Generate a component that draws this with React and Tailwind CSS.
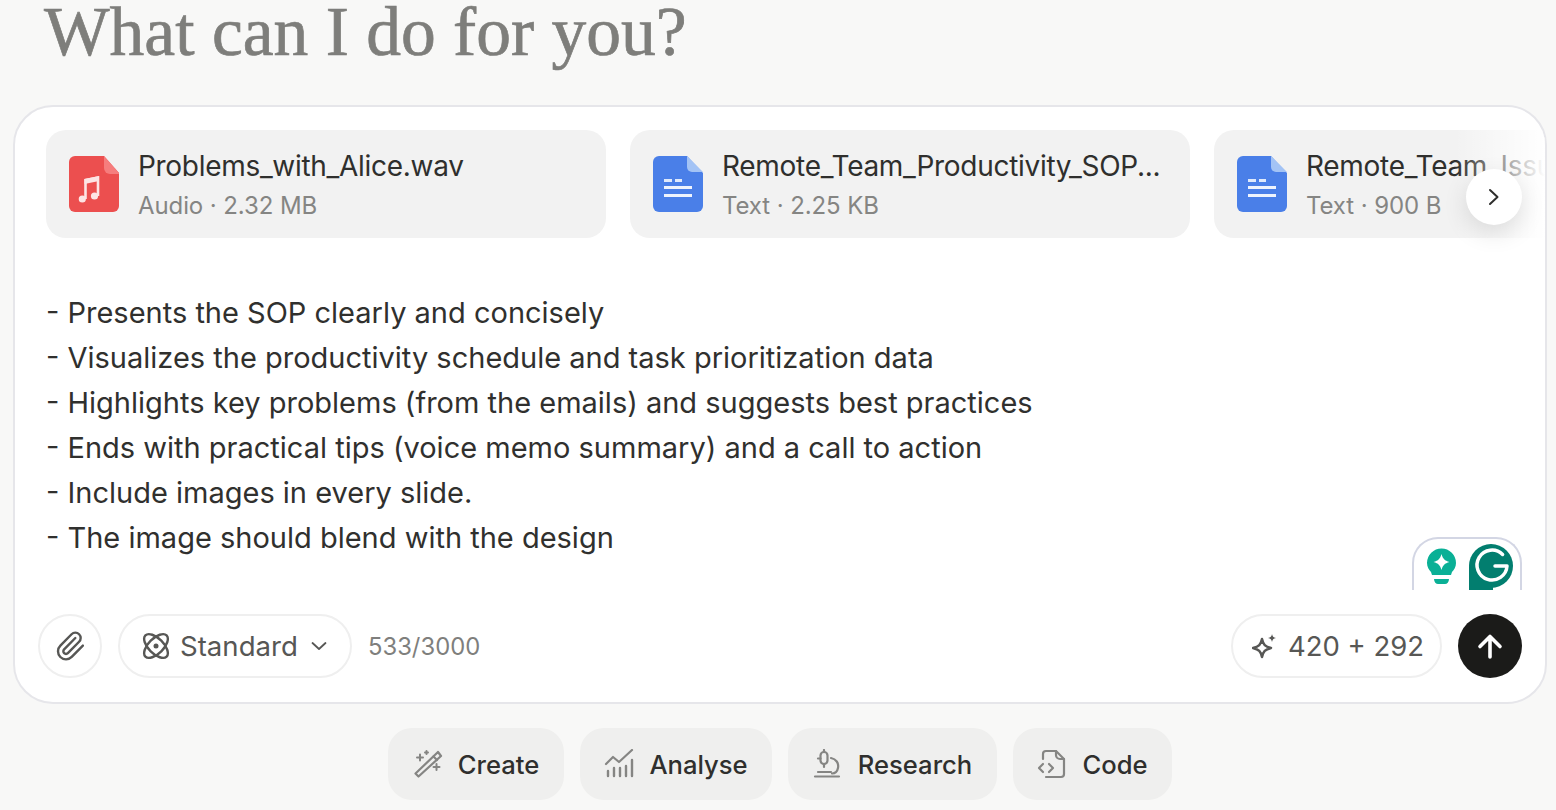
import React from "react";

function AudioIcon() {
  return (
    <svg width="50" height="56" viewBox="0 0 50 56" className="shrink-0">
      <path d="M6 0H35L50 17V50a6 6 0 0 1-6 6H6a6 6 0 0 1-6-6V6a6 6 0 0 1 6-6Z" fill="#ec4f4f" />
      <path d="M35 0L50 17V18H41a6 6 0 0 1-6-6Z" fill="#f67d7d" />
      <path d="M16.500 43V24l12.500-2.500V40" fill="none" stroke="#fde4e4" strokeWidth="2.600" />
      <circle cx="13.300" cy="43" r="3.600" fill="#fde4e4" />
      <circle cx="25.500" cy="40" r="3.600" fill="#fde4e4" />
      <path d="M15.500 23l14.500-3v5l-14.500 3Z" fill="#fde4e4" />
    </svg>
  );
}

function DocIcon() {
  return (
    <svg width="50" height="56" viewBox="0 0 50 56" className="shrink-0">
      <path d="M6 0H34L50 17V50a6 6 0 0 1-6 6H6a6 6 0 0 1-6-6V6a6 6 0 0 1 6-6Z" fill="#4a7fe8" />
      <path d="M34 0L50 16H39a5 5 0 0 1-5-5Z" fill="#a3c3f5" />
      <rect x="11" y="23" width="8" height="3" fill="#dfe9fb" />
      <rect x="22" y="23" width="7" height="3" fill="#dfe9fb" />
      <rect x="11" y="30" width="28" height="3" fill="#eef3fd" />
      <rect x="11" y="38" width="28" height="3" fill="#eef3fd" />
    </svg>
  );
}

function FileChip({ icon, name, meta }) {
  return (
    <div className="flex h-[108px] w-[560px] shrink-0 items-center gap-[19px] rounded-[20px] bg-[#f2f2f2] pl-[23px] pr-[24px]">
      {icon}
      <div className="min-w-0 flex-1 pt-[2px]">
        <div className="whitespace-nowrap text-[28px] leading-[36px] tracking-[-0.3px] text-[#2f2f2d]">{name}</div>
        <div className="mt-[6px] text-[24px] leading-[32px] tracking-[-0.1px] text-[#858583]">{meta}</div>
      </div>
    </div>
  );
}

function Pill({ children, className = "" }) {
  return (
    <div className={`flex h-[64px] items-center rounded-full border-2 border-[#efefef] bg-white ${className}`}>
      {children}
    </div>
  );
}

function QuickAction({ icon, label, w }) {
  return (
    <div className={`flex h-[72px] items-center justify-center gap-[15px] rounded-[24px] bg-[#efefee] text-[25.600px] font-medium text-[#2f2f2d] ${w}`}>
      {icon}
      <span className="mt-[2px]">{label}</span>
    </div>
  );
}

const Sv = ({ children, size = 30 }) => (
  <svg width={size} height={size} viewBox="0 0 30 30" fill="none" stroke="#858583" strokeWidth="2.200" strokeLinecap="round" strokeLinejoin="round" className="shrink-0">
    {children}
  </svg>
);

const lines = [
  "- Presents the SOP clearly and concisely",
  "- Visualizes the productivity schedule and task prioritization data",
  "- Highlights key problems (from the emails) and suggests best practices",
  "- Ends with practical tips (voice memo summary) and a call to action",
  "- Include images in every slide.",
  "- The image should blend with the design",
];

export default function App() {
  return (
    <div className="flex h-[810px] w-[1556px] flex-col overflow-hidden bg-[#f8f8f7] font-['Inter',sans-serif]">
      <h1 className="ml-[44px] h-[105px] whitespace-nowrap font-['Liberation_Serif',serif] text-[69.500px] leading-[64px] text-[#7e7e7b] [-webkit-text-stroke:0.7px_#7e7e7b]">What can I do for you?</h1>

      <div className="relative mx-[13px] h-[599px] w-[1534px] overflow-hidden rounded-[40px] border-2 border-[#e6e6ea] bg-white">
        <div className="flex gap-[24px] pl-[31px] pt-[23px]">
          <FileChip icon={<AudioIcon />} name="Problems_with_Alice.wav" meta="Audio · 2.32 MB" />
          <FileChip icon={<DocIcon />} name="Remote_Team_Productivity_SOP..." meta="Text · 2.25 KB" />
          <FileChip icon={<DocIcon />} name="Remote_Team_Issues.txt" meta="Text · 900 B" />
        </div>

        <div className="pointer-events-none absolute right-0 top-[23px] h-[108px] w-[90px] bg-gradient-to-r from-transparent to-white" />
        <div className="absolute right-[23px] top-[62px] flex h-[56px] w-[56px] items-center justify-center rounded-full bg-white shadow-[0_8px_24px_rgba(0,0,0,0.12)]">
          <svg width="22" height="22" viewBox="0 0 22 22" fill="none" stroke="#2f2f2d" strokeWidth="2" strokeLinecap="round" strokeLinejoin="round">
            <path d="M7 4l7.500 7L7 18" />
          </svg>
        </div>

        <div className="mt-[51.500px] pl-[31px] text-[29px] leading-[45px] text-[#30302e]">
          {lines.map((l) => (
            <div key={l}>{l}</div>
          ))}
        </div>

        <div className="absolute right-[23px] top-[430px] h-[53px] w-[110px] overflow-hidden rounded-t-[26px] border-2 border-b-0 border-[#d3d6e4] bg-white">
          <svg width="106" height="51" viewBox="0 0 106 51" className="block">
            <path d="M17 33c-2-2-4-5-4-9a14.500 14.500 0 1 1 29 0c0 4-2 7-4 9l-1 3H18Z" fill="#0ab096" />
            <path d="M20 40h15c0 3-2 5-4 5h-7c-2 0-4-2-4-5Z" fill="#0ab096" />
            <path d="M27.500 15c1.500 5 3 6.500 8 8-5 1.500-6.500 3-8 8-1.500-5-3-6.500-8-8 5-1.500 6.500-3 8-8Z" fill="#fff" />
            <circle cx="77" cy="27" r="22" fill="#027e6f" />
            <path d="M55 27v24h24V47Z" fill="#027e6f" />
            <path d="M88.600 15.400A15 15 0 1 0 93 27H81" fill="none" stroke="#fff" strokeWidth="3.500" strokeLinecap="round" strokeLinejoin="round" />
          </svg>
        </div>

        <div className="absolute inset-x-[23px] bottom-[24px] flex items-center">
          <Pill className="w-[64px] justify-center">
            <svg width="32" height="32" viewBox="0 0 24 24" fill="none" stroke="#575755" strokeWidth="1.800" strokeLinecap="round" strokeLinejoin="round">
              <path d="m16 6-8.414 8.586a2 2 0 0 0 2.829 2.829l8.414-8.586a4 4 0 1 0-5.657-5.657l-8.379 8.551a6 6 0 1 0 8.485 8.485l8.379-8.551" />
            </svg>
          </Pill>
          <Pill className="ml-[16px] w-[234px] pl-[22px] text-[27.600px] text-[#575755]">
            <svg width="28" height="28" viewBox="0 0 28 28" fill="none" stroke="#575755" strokeWidth="2.400" className="shrink-0">
              <ellipse cx="14" cy="14" rx="15" ry="7.500" transform="rotate(45 14 14)" />
              <ellipse cx="14" cy="14" rx="15" ry="7.500" transform="rotate(-45 14 14)" />
              <circle cx="14" cy="14" r="2.500" fill="#575755" stroke="none" />
            </svg>
            <span className="ml-[10px] mt-[1px]">Standard</span>
            <svg width="18" height="18" viewBox="0 0 18 18" fill="none" stroke="#575755" strokeWidth="1.800" strokeLinecap="round" strokeLinejoin="round" className="ml-[12px]">
              <path d="M2.500 6l6.500 6 6.500-6" />
            </svg>
          </Pill>
          <span className="ml-[16px] mt-[1px] text-[23.800px] text-[#7f7f7d]">533/3000</span>
          <div className="flex-1" />
          <Pill className="w-[211px] pl-[19px] text-[27.500px] text-[#575755]">
            <svg width="25" height="25" viewBox="2 1 25 25" className="shrink-0" fill="none" stroke="#575755" strokeWidth="2.500" strokeLinejoin="round">
              <path d="M12 6c1.300 5.800 3 7.500 9 9-6 1.500-7.700 3.200-9 9-1.300-5.800-3-7.500-9-9 6-1.500 7.700-3.200 9-9Z" />
              <path d="M22 1c.5 2.500 1.300 3.300 4 4-2.700.7-3.500 1.500-4 4-.5-2.500-1.300-3.300-4-4 2.700-.7 3.500-1.500 4-4Z" fill="#575755" stroke="none" />
            </svg>
            <span className="ml-[11px] mt-[1px] whitespace-nowrap">420 + 292</span>
          </Pill>
          <div className="ml-[16px] flex h-[64px] w-[64px] items-center justify-center rounded-full bg-[#1b1b19]">
            <svg width="28" height="28" viewBox="0 0 28 28" fill="none" stroke="#fff" strokeWidth="3.600" strokeLinecap="round" strokeLinejoin="round">
              <path d="M14 25V5M4 14.500L14 4.500 24 14.500" />
            </svg>
          </div>
        </div>
      </div>

      <div className="mt-[24px] flex justify-center gap-[16px] pl-[4px]">
        <QuickAction w="w-[176px]" label="Create" icon={
          <Sv>
            <path d="M2.500 24.500l3 3L28 7l-3-4Z" />
            <path d="M20.500 7.500l3.500 3.500" />
            <path d="M7 5.500v6M4 8.500h6M13.500 2v3M12 3.500h3M23.500 15v6M20.500 18h6" strokeWidth="2" />
          </Sv>
        } />
        <QuickAction w="w-[192px]" label="Analyse" icon={
          <Sv>
            <path d="M2 15l7-7 6 5L28 1" />
            <path d="M4 27v-5M10 27v-8M16 27v-8M22 27v-10M28 27V11" strokeWidth="2.400" />
          </Sv>
        } />
        <QuickAction w="w-[209px]" label="Research" icon={
          <Sv>
            <rect x="7.500" y="3" width="7" height="12" rx="3.500" />
            <path d="M11 1v2M11 15v3M5 9.500h2.500M18 9c5 1 8 5 7 10s-4 5.500-6 5.500" />
            <path d="M2 27.500h24M5 23h13" />
          </Sv>
        } />
        <QuickAction w="w-[159px]" label="Code" icon={
          <Sv>
            <path d="M6 10V5a3 3 0 0 1 3-3h10l8 8v15a3 3 0 0 1-3 3H9" />
            <path d="M19 2v4a4 4 0 0 0 4 4h4" />
            <path d="M6 15l-4 4 4 4M12 15l4 4-4 4" />
          </Sv>
        } />
      </div>
    </div>
  );
}
